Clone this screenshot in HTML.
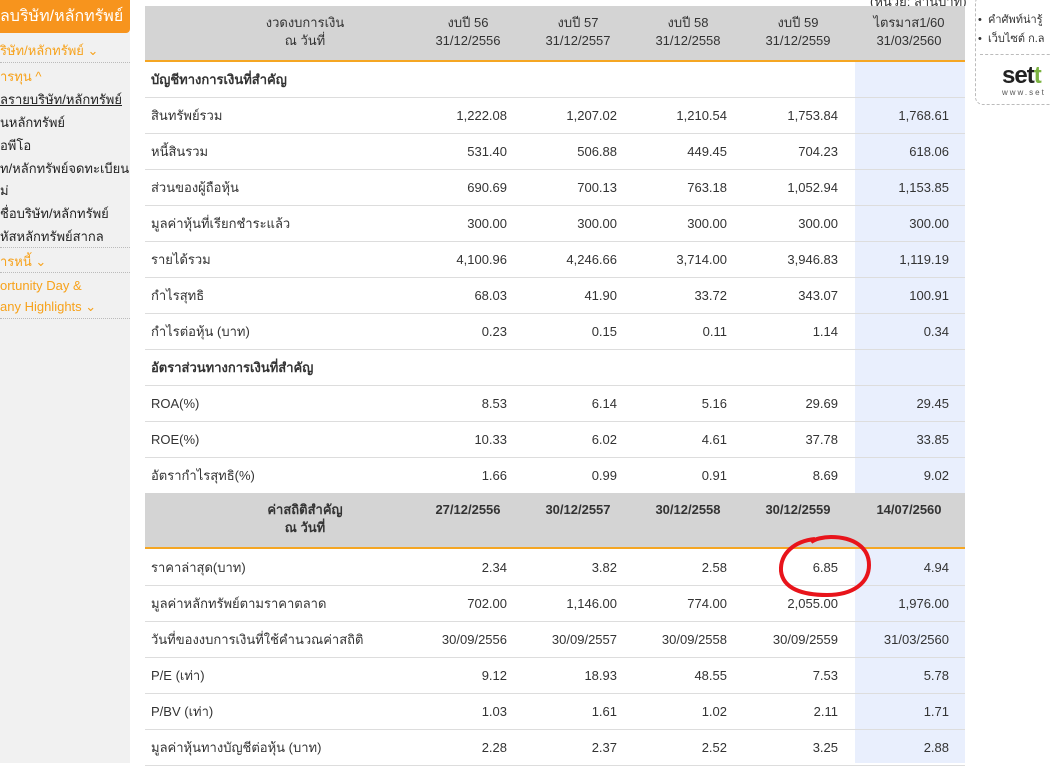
<!DOCTYPE html>
<html><head><meta charset="utf-8"><style>
body{margin:0;width:1051px;height:763px;overflow:hidden;background:#fff;font-family:"Liberation Sans","Noto Sans CJK SC",sans-serif;position:relative}
.side{position:absolute;left:0;top:0;width:130px;height:763px;background:#f1f1f1}
.sh{position:absolute;left:0;top:0;width:130px;height:33px;background:#f7941d;color:#fff;font-size:16px;line-height:33px;white-space:nowrap;overflow:hidden;border-radius:0 0 4px 0}
.si{position:absolute;left:0;white-space:nowrap;font-size:13px;color:#222}
.so{color:#f7a21b}
.dl{position:absolute;left:0;width:130px;border-top:1px dotted #bbb}
.tbl{position:absolute;left:145px;top:6px;width:820px}
.r{position:absolute;left:0;width:820px;height:35px;border-bottom:1px solid #ddd;font-size:13px;color:#333}
.r div{position:absolute;top:0;line-height:35px;text-align:right;width:100px}
.r .l{left:6px;text-align:left;width:300px}
.bl{position:absolute;left:710px;width:110px;background:#e9effd}
.hd{position:absolute;left:0;width:820px;height:54px;background:#d4d4d4;border-bottom:2px solid #f5a623;font-size:13px;color:#333}
.hd div{position:absolute;top:8px;line-height:18px;text-align:center;width:110px}
.hd.b div{font-weight:bold}
.c1{left:262px}.c2{left:372px}.c3{left:482px}.c4{left:593px}.c5{left:704px}
.hd .c1{left:268px}.hd .c2{left:378px}.hd .c3{left:488px}.hd .c4{left:598px}.hd .c5{left:709px}
</style></head><body>
<div class="side">
<div class="sh">ลบริษัท/หลักทรัพย์</div>
<div class="si so" style="top:40px">ริษัท/หลักทรัพย์ ⌄</div>
<div class="dl" style="top:62px"></div>
<div class="si so" style="top:66px">ารทุน ^</div>
<div class="si" style="top:89px;text-decoration:underline">ลรายบริษัท/หลักทรัพย์</div>
<div class="si" style="top:112px">นหลักทรัพย์</div>
<div class="si" style="top:135px">อพีโอ</div>
<div class="si" style="top:158px">ท/หลักทรัพย์จดทะเบียน</div>
<div class="si" style="top:180px">ม่</div>
<div class="si" style="top:203px">ชื่อบริษัท/หลักทรัพย์</div>
<div class="si" style="top:226px">หัสหลักทรัพย์สากล</div>
<div class="dl" style="top:247px"></div>
<div class="si so" style="top:251px">ารหนี้ ⌄</div>
<div class="dl" style="top:272px"></div>
<div class="si so" style="top:278px">ortunity Day &amp;</div>
<div class="si so" style="top:299px">any Highlights ⌄</div>
<div class="dl" style="top:318px"></div>
</div>
<div style="position:absolute;left:870px;top:-9px;font-size:13px;color:#333">(หน่วย: ล้านบาท)</div>
<div style="position:absolute;left:975px;top:-5px;width:90px;height:108px;border:1px dashed #bbb;border-radius:8px;font-size:11px;color:#333">
<div style="position:absolute;left:2px;top:14px;white-space:nowrap">• &nbsp;คำศัพท์น่ารู้</div>
<div style="position:absolute;left:2px;top:33px;white-space:nowrap">• &nbsp;เว็บไซต์ ก.ล</div>
<div style="position:absolute;left:4px;top:58px;width:80px;border-top:1px dashed #bbb"></div>
<div style="position:absolute;left:26px;top:66px;font-size:24px;font-weight:bold;color:#222;letter-spacing:-1px">set<span style="color:#7cb342">t</span></div>
<div style="position:absolute;left:26px;top:92px;font-size:8px;letter-spacing:2px;color:#555">www.set</div>
</div>
<div class="tbl" id="t"></div>
<svg style="position:absolute;left:775px;top:533px" width="100" height="68"><path d="M40 6 C20 8 5 20 6 38 C8 56 28 62 52 62 C78 62 94 50 94 32 C94 14 78 4 56 4 C48 4 40 6 36 9" fill="none" stroke="#e8141b" stroke-width="4"/></svg>
<script>
var t=document.getElementById('t'),h='';
h+='<div class="bl" style="top:0;height:757px"></div>';
function hd(y,a,c,b){h+='<div class="hd'+(b?' b':'')+'" style="top:'+y+'px"><div style="left:60px;width:200px">'+a+'</div>';for(var i=0;i<5;i++)h+='<div class="c'+(i+1)+'">'+c[i]+'</div>';h+='</div>';}
function row(y,l,v,b){h+='<div class="r" style="top:'+y+'px"><div class="l"'+(b?' style="font-weight:bold"':'')+'>'+l+'</div>';if(v)for(var i=0;i<5;i++)h+='<div class="c'+(i+1)+'">'+v[i]+'</div>';h+='</div>';}
hd(0,'งวดงบการเงิน<br>ณ วันที่',['งบปี 56<br>31/12/2556','งบปี 57<br>31/12/2557','งบปี 58<br>31/12/2558','งบปี 59<br>31/12/2559','ไตรมาส1/60<br>31/03/2560'],0);
var d=[['บัญชีทางการเงินที่สำคัญ',null,1],
['สินทรัพย์รวม',['1,222.08','1,207.02','1,210.54','1,753.84','1,768.61']],
['หนี้สินรวม',['531.40','506.88','449.45','704.23','618.06']],
['ส่วนของผู้ถือหุ้น',['690.69','700.13','763.18','1,052.94','1,153.85']],
['มูลค่าหุ้นที่เรียกชำระแล้ว',['300.00','300.00','300.00','300.00','300.00']],
['รายได้รวม',['4,100.96','4,246.66','3,714.00','3,946.83','1,119.19']],
['กำไรสุทธิ',['68.03','41.90','33.72','343.07','100.91']],
['กำไรต่อหุ้น (บาท)',['0.23','0.15','0.11','1.14','0.34']],
['อัตราส่วนทางการเงินที่สำคัญ',null,1],
['ROA(%)',['8.53','6.14','5.16','29.69','29.45']],
['ROE(%)',['10.33','6.02','4.61','37.78','33.85']],
['อัตรากำไรสุทธิ(%)',['1.66','0.99','0.91','8.69','9.02']]];
for(var i=0;i<d.length;i++)row(56+i*36,d[i][0],d[i][1],d[i][2]);
hd(487,'ค่าสถิติสำคัญ<br>ณ วันที่',['27/12/2556','30/12/2557','30/12/2558','30/12/2559','14/07/2560'],1);
var e=[['ราคาล่าสุด(บาท)',['2.34','3.82','2.58','6.85','4.94']],
['มูลค่าหลักทรัพย์ตามราคาตลาด',['702.00','1,146.00','774.00','2,055.00','1,976.00']],
['วันที่ของงบการเงินที่ใช้คำนวณค่าสถิติ',['30/09/2556','30/09/2557','30/09/2558','30/09/2559','31/03/2560']],
['P/E (เท่า)',['9.12','18.93','48.55','7.53','5.78']],
['P/BV (เท่า)',['1.03','1.61','1.02','2.11','1.71']],
['มูลค่าหุ้นทางบัญชีต่อหุ้น (บาท)',['2.28','2.37','2.52','3.25','2.88']]];
for(var i=0;i<e.length;i++)row(544+i*36,e[i][0],e[i][1]);
t.innerHTML=h;
</script>
</body></html>
